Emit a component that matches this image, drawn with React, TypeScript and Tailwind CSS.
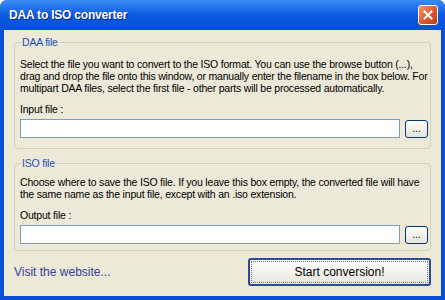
import React from "react";

const font = { fontFamily: '"Liberation Sans", Arial, sans-serif' };
const body = "text-[10.5px] tracking-[-0.2px]";

function BrowseButton() {
    return (
        <button
            type="button"
            className="flex h-[18px] w-[23px] shrink-0 items-end justify-center rounded-[3px] border border-[#003c74] bg-gradient-to-b from-white to-[#e6e3d6] pb-[3px] text-[10px] leading-none text-black"
        >
            ...
        </button>
    );
}

function FileRow({ label }: { label: string }) {
    return (
        <div className="mt-[9px]">
            <div className={`${body} leading-[13px] text-black`}>{label}</div>
            <div className="mt-[3px] flex items-center gap-[5px]">
                <input
                    type="text"
                    className="h-[19px] min-w-0 flex-1 border border-[#7f9db9] bg-white px-1 text-[11px] outline-none"
                />
                <BrowseButton />
            </div>
        </div>
    );
}

function GroupBox({
    title,
    compact,
    children,
}: {
    title: string;
    compact?: boolean;
    children: React.ReactNode;
}) {
    return (
        <fieldset
            className={
                compact
                    ? "min-w-0 rounded-[4px] border border-[#d0d0bf] pb-[6px] pl-[5px] pr-[2px]"
                    : "min-w-0 rounded-[4px] border border-[#d0d0bf] pb-[10px] pl-[5px] pr-[2px]"
            }
        >
            <legend className={`${body} ml-[1px] px-[1px] leading-[13px] text-[#1d4fb8]`}>
                {title}
            </legend>
            {children}
        </fieldset>
    );
}

export default function App() {
    return (
        <div
            className="flex h-[300px] w-[445px] flex-col overflow-hidden rounded-t-[7px] bg-[#0a4fd6]"
            style={font}
        >
            {/* title bar */}
            <div className="flex h-[30px] shrink-0 items-center justify-between bg-gradient-to-b from-[#3b8cf5] via-[#0b5ae0] to-[#0650d8] pl-[9px] pr-[7px]">
                <span className="text-[12px] font-bold tracking-[-0.2px] text-white [text-shadow:1px_1px_0_#0a2a8a]">
                    DAA to ISO converter
                </span>
                <button
                    type="button"
                    className="flex h-[20px] w-[20px] items-center justify-center rounded-[3px] border border-white bg-gradient-to-br from-[#f09a78] via-[#e2592f] to-[#c23a10]"
                >
                    <svg width="10" height="10" viewBox="0 0 10 10">
                        <path
                            d="M1.5 1.5 L8.5 8.5 M8.5 1.5 L1.5 8.5"
                            stroke="white"
                            strokeWidth="2"
                            strokeLinecap="square"
                        />
                    </svg>
                </button>
            </div>

            {/* client area */}
            <div className="mx-[4px] mb-[4px] flex flex-1 flex-col bg-[#ece9d8] px-[10px] pt-[6px]">
                <GroupBox title="DAA file">
                    <p className={`${body} mt-[9px] whitespace-nowrap leading-[12px] text-black`}>
                        Select the file you want to convert to the ISO format. You can use the browse button (...),
                        <br />
                        drag and drop the file onto this window, or manually enter the filename in the box below. For
                        <br />
                        multipart DAA files, select the first file - other parts will be processed automatically.
                    </p>
                    <FileRow label="Input file :" />
                </GroupBox>

                <div className="mt-[8px]">
                    <GroupBox title="ISO file" compact>
                        <p className={`${body} mt-[6px] whitespace-nowrap leading-[12px] text-black`}>
                            Choose where to save the ISO file. If you leave this box empty, the converted file will have
                            <br />
                            the same name as the input file, except with an .iso extension.
                        </p>
                        <FileRow label="Output file :" />
                    </GroupBox>
                </div>

                <div className="mt-[7px] flex items-center justify-between">
                    <a className="text-[12px] text-[#3b3b9b]">Visit the website...</a>
                    <button
                        type="button"
                        className="h-[28px] w-[183px] rounded-[3px] border-2 border-[#2d4c8f] bg-gradient-to-b from-white to-[#e7e5dc] text-[12px] text-black outline-1 outline-dotted outline-offset-[-4px] outline-[#7c7c7c]"
                    >
                        Start conversion!
                    </button>
                </div>
            </div>
        </div>
    );
}
